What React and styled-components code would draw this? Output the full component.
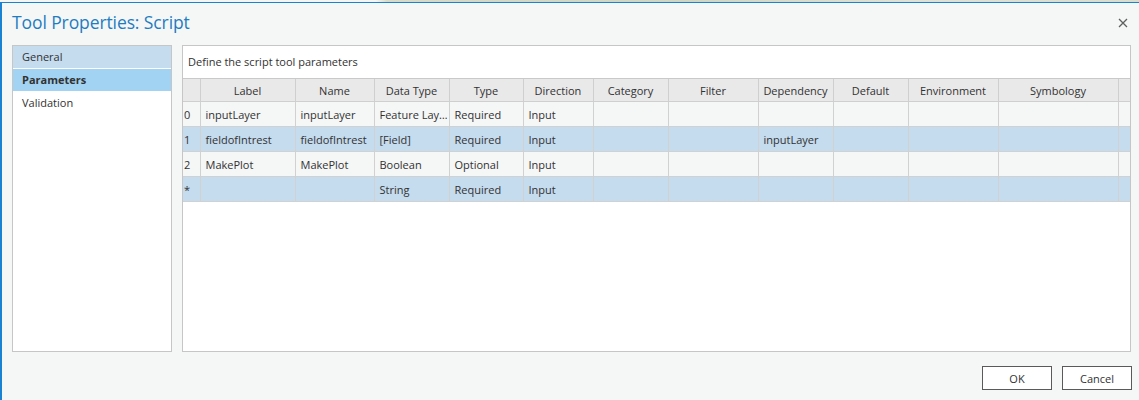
import React from "react";
import styled, { createGlobalStyle } from "styled-components";

const Global = createGlobalStyle`
  html, body { margin: 0; padding: 0; background: #f5f7f7; }
  body { font-family: "Open Sans", "Noto Sans", sans-serif; }
`;

const Backdrop = styled.div`
  height: 2px;
  background: linear-gradient(90deg, #f4f6f4 0%, #f4f6f4 33%, #d7dbc9 34%, #cfd6c4 60%, #dfe2d6 80%, #d9ddd0 100%);
`;

const Dialog = styled.div`
  width: 1137px;
  height: 397px;
  border-top: 1px solid #1b82d1;
  border-left: 2px solid #1b82d1;
  background: #f5f7f7;
  display: flex;
  flex-direction: column;
  box-sizing: content-box;
`;

const TitleBar = styled.div`
  height: 42px;
  display: flex;
  align-items: center;
  justify-content: space-between;
  padding: 0 9px 0 10px;
`;

const Title = styled.h1`
  margin: 0;
  margin-top: -4px;
  font-family: "Open Sans", sans-serif;
  font-weight: 400;
  font-size: 17.5px;
  color: #1f7cc0;
  letter-spacing: -0.1px;
`;

const Close = styled.button`
  border: none;
  background: transparent;
  padding: 0;
  width: 14px;
  height: 14px;
  margin-top: -3px;
  display: flex;
  align-items: center;
  justify-content: center;
`;

const Body = styled.div`
  display: flex;
  gap: 10px;
  padding: 0 0 0 10px;
  height: 307px;
`;

const Nav = styled.nav`
  width: 158px;
  border: 1px solid #c6c6c6;
  background: #ffffff;
  display: flex;
  flex-direction: column;
`;

const NavItem = styled.div`
  height: 22px;
  line-height: 22px;
  padding-left: 9px;
  font-size: 11px;
  color: #323232;
  font-weight: ${(p) => (p.$active ? 700 : 400)};
  background: ${(p) => (p.$active ? "#a3d3f2" : p.$hover ? "#c5dcef" : "#ffffff")};
  border-bottom: 1px solid ${(p) => (p.$active || p.$hover ? "#ffffff" : "transparent")};
`;

const Panel = styled.section`
  width: 947px;
  border: 1px solid #c6c6c6;
  background: #ffffff;
  display: flex;
  flex-direction: column;
`;

const PanelHeader = styled.div`
  height: 32px;
  line-height: 32px;
  padding-left: 5px;
  font-size: 11px;
  color: #323232;
  border-bottom: 1px solid #c9c9c9;
  box-sizing: border-box;
  height: 33px;
`;

const Table = styled.table`
  border-collapse: collapse;
  table-layout: fixed;
  width: 947px;
  font-size: 11px;
  color: #323232;
`;

const Th = styled.th`
  height: 22px;
  padding: 0;
  font-weight: 400;
  text-align: center;
  background: #e9e9e9;
  border: 1px solid #cfcfcf;
  border-top: none;
  &:first-child { border-left: none; }
  &:last-child { border-right: none; }
`;

const Td = styled.td`
  height: 24px;
  padding: 0 0 0 ${(p) => (p.$num ? "1px" : "5px")};
  white-space: nowrap;
  overflow: hidden;
  text-overflow: ellipsis;
  border: 1px solid #d1d1d1;
  &:first-child { border-left: none; }
  &:last-child { border-right: none; }
`;

const Tr = styled.tr`
  background: ${(p) => (p.$alt ? "#c5dbee" : "#f5f6f6")};
`;

const Footer = styled.div`
  display: flex;
  justify-content: flex-end;
  gap: 10px;
  padding: 14px 7px 0 0;
`;

const Button = styled.button`
  width: 70px;
  height: 24px;
  border: 1px solid #5a5a5a;
  background: #ffffff;
  font-family: "Open Sans", sans-serif;
  font-size: 11px;
  color: #323232;
  padding: 0;
`;

const cols = [
  ["", 17],
  ["Label", 95],
  ["Name", 79],
  ["Data Type", 75],
  ["Type", 74],
  ["Direction", 70],
  ["Category", 75],
  ["Filter", 90],
  ["Dependency", 75],
  ["Default", 75],
  ["Environment", 90],
  ["Symbology", 120],
  ["", 12],
];

const rows = [
  ["0", "inputLayer", "inputLayer", "Feature Layer", "Required", "Input", "", "", "", "", "", "", ""],
  ["1", "fieldofIntrest", "fieldofIntrest", "[Field]", "Required", "Input", "", "", "inputLayer", "", "", "", ""],
  ["2", "MakePlot", "MakePlot", "Boolean", "Optional", "Input", "", "", "", "", "", "", ""],
  ["*", "", "", "String", "Required", "Input", "", "", "", "", "", "", ""],
];

export default function App() {
  return (
    <>
      <Global />
      <Backdrop />
      <Dialog>
        <TitleBar>
          <Title>Tool Properties: Script</Title>
          <Close aria-label="Close">
            <svg width="10" height="10" viewBox="0 0 10 10">
              <path d="M1 1 L9 9 M9 1 L1 9" stroke="#5f5f5f" strokeWidth="1.3" />
            </svg>
          </Close>
        </TitleBar>
        <Body>
          <Nav>
            <NavItem $hover>General</NavItem>
            <NavItem $active>Parameters</NavItem>
            <NavItem>Validation</NavItem>
          </Nav>
          <Panel>
            <PanelHeader>Define the script tool parameters</PanelHeader>
            <Table>
              <colgroup>
                {cols.map(([, w], i) => (
                  <col key={i} style={{ width: w }} />
                ))}
              </colgroup>
              <thead>
                <tr>
                  {cols.map(([n], i) => (
                    <Th key={i}>{n}</Th>
                  ))}
                </tr>
              </thead>
              <tbody>
                {rows.map((r, ri) => (
                  <Tr key={ri} $alt={ri % 2 === 1}>
                    {r.map((c, ci) => (
                      <Td key={ci} $num={ci === 0}>{c}</Td>
                    ))}
                  </Tr>
                ))}
              </tbody>
            </Table>
          </Panel>
        </Body>
        <Footer>
          <Button>OK</Button>
          <Button>Cancel</Button>
        </Footer>
      </Dialog>
    </>
  );
}
